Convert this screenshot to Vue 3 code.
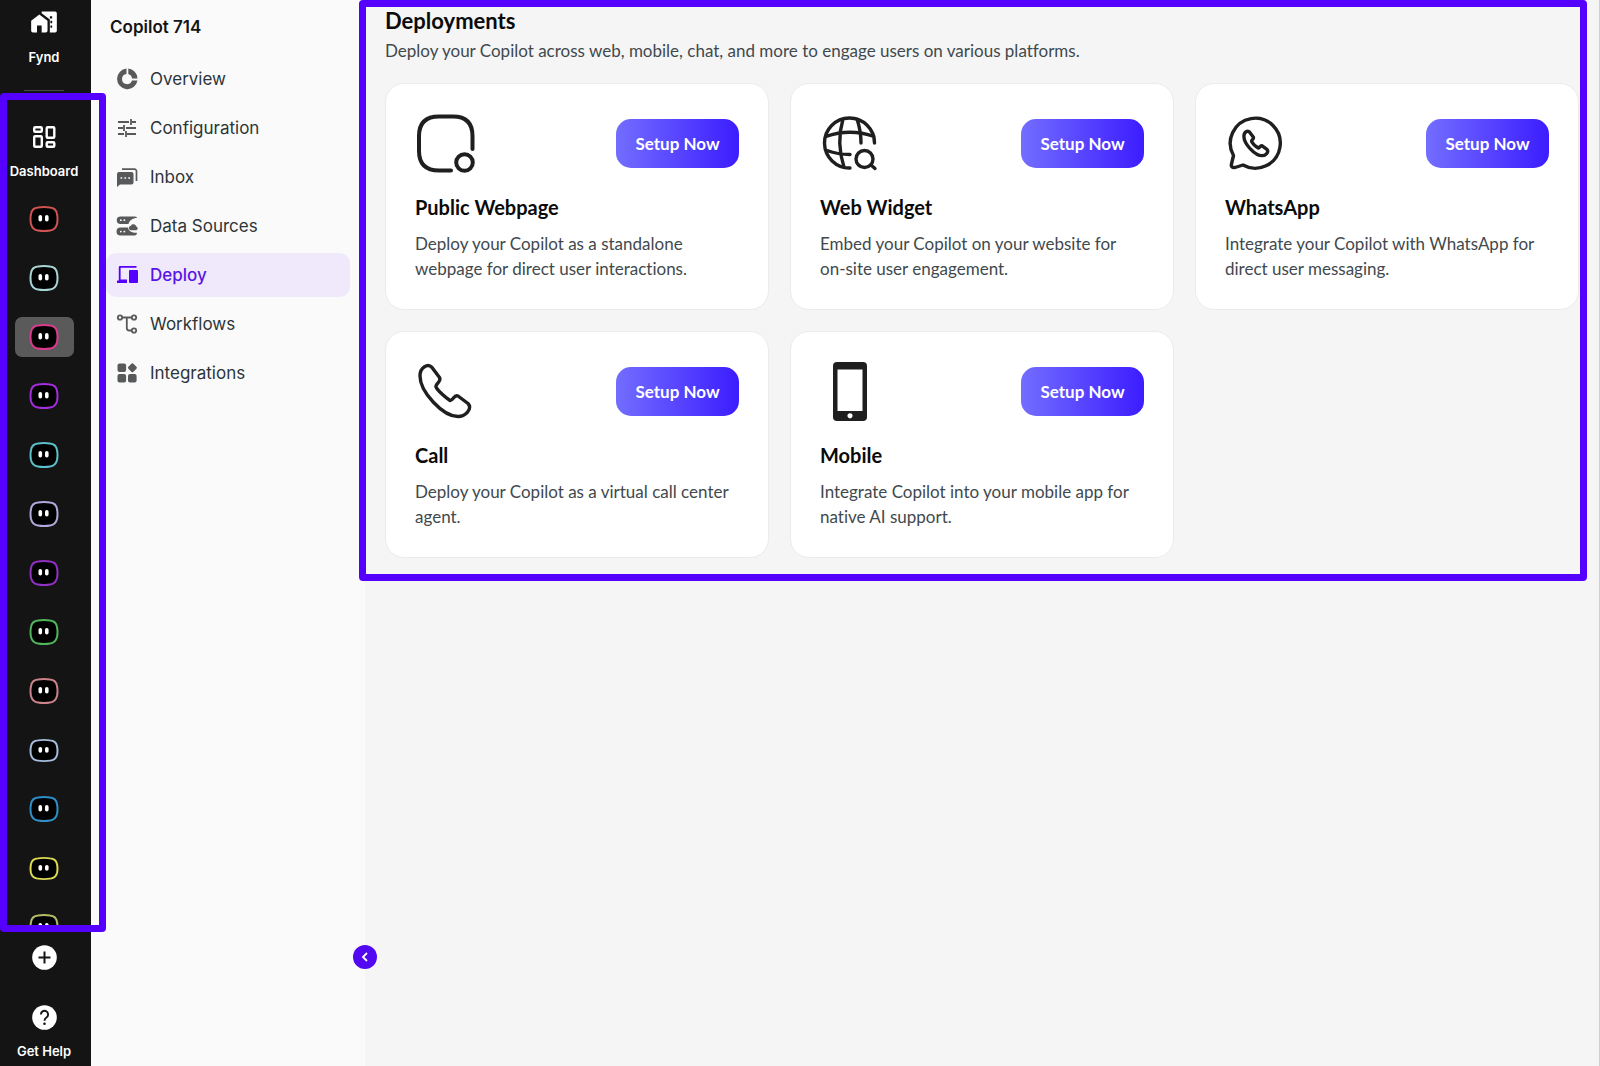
<script setup>
import { ref } from 'vue';

const activeBot = ref(2)
const activeMenu = ref('Deploy')
const collapsed = ref(false)

// h is the height of the bot outline
const bots = [
    { color: '#cf5352', h: 25 },
    { color: '#a9d6d5', h: 25 },
    { color: '#dc3a8c', h: 25 },
    { color: '#a42ddd', h: 25 },
    { color: '#5cc1cb', h: 25 },
    { color: '#b3a8dc', h: 25 },
    { color: '#9230c4', h: 25 },
    { color: '#4fb65c', h: 25 },
    { color: '#cb828b', h: 25 },
    { color: '#a4bddc', h: 22 },
    { color: '#2f90c8', h: 25 },
    { color: '#dcda55', h: 22 },
    { color: '#b4bd66', h: 25 },
]

const menu = [
    {
        name: 'Overview',
        icon: '<path d="M10.500.6A10.300 10.300 0 1 0 21.500 12.600h-5.500A5.100 5.100 0 1 1 10.500 6z"/><path d="M12.300.6V6A5.100 5.100 0 0 1 16 10.400h5.500A10.300 10.300 0 0 0 12.300.6z"/>',
    },
    {
        name: 'Configuration',
        icon: '<path fill="none" stroke="currentColor" stroke-width="1.800" d="M2 5h11M16 5h4M15 2v6M2 11h5M10 11h10M8 8v6M2 17h6M11 17h9M10 14v6"/>',
    },
    {
        name: 'Inbox',
        icon: '<path d="M3 6h12.500a2 2 0 0 1 2 2v8.500a2 2 0 0 1-2 2H4L1 21V8a2 2 0 0 1 2-2z"/><path fill="none" stroke="currentColor" stroke-width="1.700" d="M6 3.200h12.500a2 2 0 0 1 2 2V15"/><path stroke="#fafafa" stroke-width="1.700" d="M4.500 12h1.700M8.400 12h1.700M12.300 12H14"/>',
    },
    {
        name: 'Data Sources',
        icon: '<path d="M4.500 1.500H19q2 0 2 1.500c-4.500 0-7.500 2.500-8.500 6H4.500a3.750 3.750 0 0 1 0-7.500zM4.500 12.500H12c.5 3.500 4 5.500 9 5.300q-.2 2.700-2.500 2.700h-14a4 4 0 0 1 0-8z"/><path d="M14.500 15.200a2.300 2.300 0 0 1 .3-4.500 3 3 0 0 1 5.500.8A1.900 1.900 0 0 1 20 15.200z"/><path stroke="#fafafa" stroke-width="1.800" stroke-linecap="round" d="M4.800 5.200h.1M8.300 5.200h.1M4.800 16.600h.1M8.300 16.600h.1"/>',
    },
    {
        name: 'Deploy',
        icon: '<path d="M4 2H20.500v1.800H4.600V15.500H11V19H1v-2.600h1.800V3.200Q2.800 2 4 2z"/><rect x="13" y="6" width="9" height="13" rx="1"/>',
    },
    {
        name: 'Workflows',
        icon: '<g fill="none" stroke="currentColor" stroke-width="1.800"><circle cx="4" cy="4.500" r="2.200"/><circle cx="18" cy="4.500" r="2.200"/><circle cx="18" cy="17.500" r="2.200"/><path d="M6.200 4.500h9.600M10.800 4.500V15q0 2.500 2.500 2.500h2.500"/></g>',
    },
    {
        name: 'Integrations',
        icon: '<rect x="1.500" y="1.500" width="8.600" height="8.600" rx="2"/><rect x="1.500" y="12" width="8.600" height="8.600" rx="2"/><rect x="12" y="12" width="8.600" height="8.600" rx="2"/><rect x="12.800" y="2.200" width="7.200" height="7.200" rx="1.500" transform="rotate(45 16.400 5.800)"/>',
    },
]

const phone = 'M5 14C5 5 13 1 17 5.500L24.500 15.500C27 19.500 20 22 21 25C23 29 31 36 35 38.500C38 39 39 32 43 34L53 41.500C58 47 50 54.500 43 54.500C28 54.500 5 30 5 14Z'

const deployments = [
    {
        name: 'Public Webpage',
        text: 'Deploy your Copilot as a standalone webpage for direct user interactions.',
        icon: '<path stroke-width="4" d="M57.500 36V23Q57.500 3.500 38 3.500H24Q4 3.500 4 23V38Q4 57.500 24 57.500H36"/><circle stroke-width="4" cx="49.500" cy="49.500" r="8.300"/>',
    },
    {
        name: 'Web Widget',
        text: 'Embed your Copilot on your website for on-site user engagement.',
        icon: '<path d="M54.500 30A25 25 0 1 0 30 55M6 23.500Q30 15 54 23.500M23 6Q16 30 24 54M37 6Q41 18 41 30M7 37.500Q18 41.500 30 41.500M51 52L55 55.500"/><circle cx="44.500" cy="46" r="8.500"/>',
    },
    {
        name: 'WhatsApp',
        text: 'Integrate your Copilot with WhatsApp for direct user messaging.',
        icon: '<path d="M8.500 42.500A25 25 0 1 1 18 52L10 54.500Q5.500 55 6.500 51Z"/><path transform="translate(16.500 16.500) scale(.48)" stroke-width="7" d="' + phone + '"/>',
    },
    {
        name: 'Call',
        text: 'Deploy your Copilot as a virtual call center agent.',
        icon: '<path transform="translate(0 1)" d="' + phone + '"/>',
    },
    {
        name: 'Mobile',
        text: 'Integrate Copilot into your mobile app for native AI support.',
        icon: '<path stroke="none" fill="#1f1f1f" fill-rule="evenodd" d="M17 1h26q4 0 4 4v51q0 4-4 4H17q-4 0-4-4V5q0-4 4-4zM17.500 8.500V50h25V8.500zM30 52.200a2.600 2.600 0 1 0 .01 0z"/>',
    },
]
</script>

<template>
    <div class="app">
        <nav class="rail">
            <a class="rail-link fynd" href="#">
                <svg width="28" height="28" viewBox="0 0 24 24" fill="#fff">
                    <path d="M1 11v8.500Q1 21 2.500 21H6v-6h4v6h3.500q1.500 0 1.500-1.500V11L8 5.500z" />
                    <path fill-rule="evenodd" d="M10 3v1.500l7 5.300V21h4.500q1.500 0 1.500-1.500v-15Q23 3 21.500 3zm7 4h2v2h-2zm2 4h-1.500v2H19zm0 4h-1.500v2H19z" />
                </svg>
                <span>Fynd</span>
            </a>
            <hr class="divider">

            <div class="rail-main">
                <div class="rail-list">
                    <a class="rail-link dashboard" href="#">
                        <svg width="26" height="26" viewBox="0 0 26 26" fill="none" stroke="#fff" stroke-width="2.400">
                            <rect x="3.200" y="3.200" width="7.600" height="4.600" rx="1" />
                            <rect x="15.700" y="3.200" width="7.600" height="10.600" rx="1" />
                            <rect x="3.200" y="12.200" width="7.600" height="10.600" rx="1" />
                            <rect x="15.700" y="18.200" width="7.600" height="4.600" rx="1" />
                        </svg>
                        <span>Dashboard</span>
                    </a>
                    <button
                        class="bot"
                        v-for="(bot,index) in bots"
                        :key="index"
                        :class="{ active: index === activeBot }"
                        :aria-label="'Copilot ' + (index + 1)"
                        @click="activeBot = index"
                    >
                        <svg width="30" :height="bot.h + 1" viewBox="0 0 30 26" preserveAspectRatio="none">
                            <path d="M9 1.500Q15 .5 21 1.500Q27 2 28 8Q29 13 28 18Q26.500 24 21 24.500Q15 25.500 9 24.500Q3.500 24 2 18Q1 13 2 8Q3 2 9 1.500Z" fill="#000" :stroke="bot.color" stroke-width="2" />
                            <rect x="9.500" y="9" width="3.600" height="6.500" rx="1.800" fill="#fff" />
                            <rect x="16" y="9" width="3.600" height="6.500" rx="1.800" fill="#fff" />
                        </svg>
                    </button>
                </div>
                <div class="frame rail-frame"></div>
            </div>

            <button class="add" aria-label="Add copilot">
                <svg width="25" height="25" viewBox="0 0 25 25">
                    <circle cx="12.500" cy="12.500" r="12.300" fill="#fff" />
                    <path d="M12.500 6.500v12M6.500 12.500h12" stroke="#141414" stroke-width="2" />
                </svg>
            </button>
            <a class="rail-link help" href="#">
                <svg width="25" height="25" viewBox="0 0 25 25">
                    <circle cx="12.500" cy="12.500" r="12.300" fill="#fff" />
                    <path d="M8.900 9.500a3.600 3.600 0 1 1 5.800 2.800q-2.200 1.500-2.200 3.500" fill="none" stroke="#141414" stroke-width="1.900" />
                    <circle cx="12.500" cy="18.700" r="1.300" fill="#141414" />
                </svg>
                <span>Get Help</span>
            </a>
        </nav>

        <aside class="sidebar">
            <h2>Copilot 714</h2>
            <ul>
                <li v-for="item in menu" :key="item.name">
                    <a
                        href="#"
                        :class="{ active: item.name === activeMenu }"
                        @click.prevent="activeMenu = item.name"
                    >
                        <svg width="22" height="22" viewBox="0 0 22 22" fill="currentColor" v-html="item.icon"></svg>
                        <span>{{ item.name }}</span>
                    </a>
                </li>
            </ul>
            <button class="collapse" aria-label="Collapse menu" @click="collapsed = !collapsed">
                <svg width="10" height="12" viewBox="0 0 10 12" fill="none" stroke="#fff" stroke-width="1.800">
                    <path d="M7 2L3 6l4 4" />
                </svg>
            </button>
        </aside>

        <main class="content">
            <section class="deployments">
                <h1>Deployments</h1>
                <p class="intro">Deploy your Copilot across web, mobile, chat, and more to engage users on various platforms.</p>
                <div class="cards">
                    <article class="card" v-for="item in deployments" :key="item.name">
                        <div class="card-top">
                            <svg width="60" height="60" viewBox="0 0 60 60" fill="none" stroke="#1f1f1f" stroke-width="3.400" stroke-linecap="round" stroke-linejoin="round" v-html="item.icon"></svg>
                            <button class="btn">Setup Now</button>
                        </div>
                        <h3>{{ item.name }}</h3>
                        <p>{{ item.text }}</p>
                    </article>
                </div>
                <div class="frame content-frame"></div>
            </section>
        </main>
    </div>
</template>

<style>
body {
    margin: 0;
    background: #f5f5f5;
}
</style>

<style scoped>
.app {
    display: flex;
    min-height: 100vh;
    font-family: Inter, "Liberation Sans", sans-serif;
}

.app * {
    box-sizing: border-box;
}

h1, h2, h3, p, ul {
    margin: 0;
    padding: 0;
}

a {
    color: inherit;
    text-decoration: none;
}

button {
    border: none;
    padding: 0;
    background: none;
    cursor: pointer;
    font-family: inherit;
}

svg {
    display: block;
    flex: none;
}

.frame {
    position: absolute;
    border: 7px solid #5500ff;
    border-radius: 4px;
    pointer-events: none;
}

/* dark rail */
.rail {
    position: sticky;
    top: 0;
    z-index: 2;
    flex: none;
    display: flex;
    flex-direction: column;
    align-items: center;
    width: 91px;
    height: 100vh;
    padding: 8px 0 6px;
    background: #141414;
    color: #fff;
}

.rail-link {
    display: flex;
    flex-direction: column;
    flex: none;
    align-items: center;
    gap: 12px;
    padding-right: 3px;
    font-size: 13px;
    font-weight: 600;
    line-height: 18px;
}

.divider {
    width: 40px;
    height: 1px;
    margin: 24px 3px 0 0;
    border: none;
    background: #4a4a4a;
}

.rail-main {
    position: relative;
    flex: 1;
    min-height: 0;
    width: 100%;
    margin-bottom: 19px;
}

.rail-list {
    display: flex;
    flex-direction: column;
    align-items: center;
    gap: 19px;
    height: 100%;
    padding: 33px 3px 0 0;
    overflow: hidden;
}

.dashboard {
    padding: 0;
}

.rail-frame {
    inset: 2px -15px -6px 0;
}

.bot {
    display: flex;
    flex: none;
    align-items: center;
    justify-content: center;
    width: 59px;
    height: 40px;
    border-radius: 7px;
}

.bot.active {
    background: #5a5a5a;
}

.add {
    margin: 0 3px 35px 0;
}

/* menu */
.sidebar {
    position: sticky;
    top: 0;
    z-index: 1;
    flex: none;
    width: 274px;
    height: 100vh;
    padding: 15px 15px 0;
    background: #fafafa;
}

.sidebar h2 {
    padding: 0 4px;
    font-size: 17px;
    font-weight: 600;
    line-height: 24px;
    color: #141414;
}

.sidebar ul {
    display: flex;
    flex-direction: column;
    gap: 5px;
    margin-top: 18px;
    list-style: none;
}

.sidebar li a {
    display: flex;
    align-items: center;
    gap: 12px;
    height: 44px;
    padding: 0 10px;
    border-radius: 10px;
    font-size: 17px;
    color: #2b3538;
}

.sidebar li svg {
    color: #58595b;
}

.sidebar li a.active {
    background: #efe9fb;
    color: #5a14e6;
    font-weight: 500;
}

.sidebar li a.active svg {
    color: #5500ff;
}

.collapse {
    position: absolute;
    right: -12px;
    bottom: 97px;
    display: flex;
    align-items: center;
    justify-content: center;
    width: 24px;
    height: 24px;
    border-radius: 50%;
    background: #5208f0;
}

/* deployments */
.content {
    position: relative;
    z-index: 1;
    flex: 1;
    min-width: 0;
    border-right: 1px solid #cfcfcf;
    font-family: Lato, "Liberation Sans", sans-serif;
    font-variant-ligatures: none;
}

.deployments {
    position: relative;
    padding: 7px 20px 0;
}

.deployments h1 {
    font-size: 22px;
    font-weight: 700;
    line-height: 28px;
    color: #0b0b0b;
}

.intro {
    margin-top: 4px;
    font-size: 17px;
    line-height: 24px;
    color: #41494d;
}

.cards {
    display: grid;
    grid-template-columns: repeat(3, 1fr);
    gap: 21px;
    margin-top: 20px;
}

.card {
    padding: 29px 29px 28px;
    border: 1px solid #ebebeb;
    border-radius: 19px;
    background: #fff;
}

.card-top {
    display: flex;
    align-items: center;
    justify-content: space-between;
    height: 60px;
}

.btn {
    width: 123px;
    height: 49px;
    border-radius: 15px;
    background: linear-gradient(90deg, #736dff, #3c1dff);
    color: #fff;
    font-size: 17px;
    font-weight: 700;
}

.card h3 {
    margin-top: 22px;
    font-size: 20px;
    font-weight: 700;
    line-height: 24px;
    color: #0b0b0b;
}

.card p {
    margin-top: 12px;
    font-size: 17px;
    line-height: 25px;
    color: #41494d;
}

.content-frame {
    inset: 0 12px -23px -6px;
}

@media (max-width: 1200px) {
    .cards {
        grid-template-columns: repeat(2, 1fr);
    }
}
</style>
